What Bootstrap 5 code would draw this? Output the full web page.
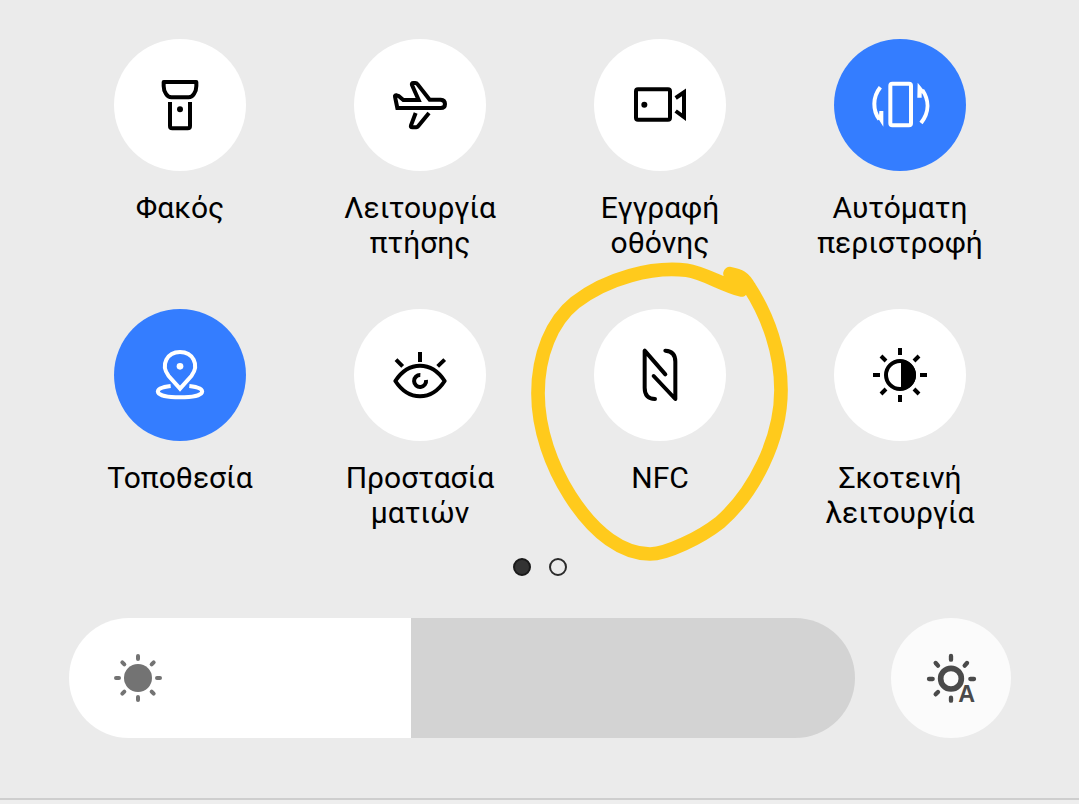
<!DOCTYPE html>
<html lang="el">
<head>
<meta charset="utf-8">
<meta name="viewport" content="width=device-width, initial-scale=1">
<title>Γρήγορες ρυθμίσεις</title>
<link rel="stylesheet" href="https://cdn.jsdelivr.net/npm/bootstrap@5.3.0/dist/css/bootstrap.min.css">
<style>
body { background: #ebebeb; color: #000; font-family: Roboto, "Noto Sans", sans-serif; }
.tiles { padding: 39px 59px 0 60px; row-gap: 48px; }
.tile { border: 0; background: none; padding: 0; color: #000; font-size: 30px; line-height: 35px; }
.disc { width: 132px; height: 132px; margin-bottom: 19px; background: #fff; }
.tile[aria-pressed="true"] .disc { background: #347dff; color: #fff; }
.glyph { width: 60px; height: 60px; fill: none; stroke: currentColor; stroke-width: 12; }
.solid { fill: currentColor; stroke: none; }
.tile-label { min-height: 71px; }
.scribble { left: 50%; top: -59px; width: 290px; height: 330px; margin-left: -140px; pointer-events: none; z-index: 2; }
.pager { gap: 18px; padding-top: 27px; }
.pager-dot { width: 18px; height: 18px; padding: 0; border: 2px solid #2b2b2b; background: transparent; }
.pager-dot[aria-current] { background: #333; border-color: #1a1a1a; }
.brightness { gap: 36px; padding: 42px 68px 60px 69px; }
.level { appearance: none; display: block; width: 100%; height: 120px; margin: 0; border-radius: 60px; background: linear-gradient(to right, #fff var(--level), #d3d3d3 var(--level)); }
.level::-webkit-slider-thumb { appearance: none; width: 1px; height: 120px; background: transparent; }
.level::-moz-range-thumb { width: 1px; height: 120px; border: 0; background: transparent; }
.level-icon { left: 39px; top: 30px; color: #737373; pointer-events: none; }
.auto { width: 120px; height: 120px; padding: 0; border: 0; background: #fbfbfb; color: #4a4a4a; }
.edge { height: 6px; border-top: 2px solid #cecece; background: #eee; }
</style>
</head>
<body>
<main>
  <section class="tiles row row-cols-4 g-0" aria-label="Γρήγορες ρυθμίσεις">
    <div class="col">
      <button type="button" class="tile w-100 d-flex flex-column align-items-center" aria-pressed="false">
        <span class="disc rounded-circle d-flex align-items-center justify-content-center">
          <svg class="glyph" viewBox="150 135 180 180" aria-hidden="true">
            <path d="M191 156H289V168C289 186 278 202 266 202H214C202 202 191 186 191 168Z" stroke-linejoin="round"/>
            <path d="M210 216V288Q210 295 217 295H263Q270 295 270 288V216"/>
            <circle class="solid" cx="240" cy="238" r="9"/>
          </svg>
        </span>
        <span class="tile-label">Φακός</span>
      </button>
    </div>
    <div class="col">
      <button type="button" class="tile w-100 d-flex flex-column align-items-center" aria-pressed="false">
        <span class="disc rounded-circle d-flex align-items-center justify-content-center">
          <svg class="glyph" viewBox="150 135 180 180" aria-hidden="true">
            <path d="M172 234L165 200Q164 195 170 196L176 198L190 210H236L216 165Q214 159 220 159H226Q230 159 233 163L269 209H302Q315 210 315 222Q315 234 302 234Z"/>
            <path d="M227 249L213 286Q211 292 217 292H229Q232 292 235 288L267 249"/>
          </svg>
        </span>
        <span class="tile-label">Λειτουργία<br>πτήσης</span>
      </button>
    </div>
    <div class="col">
      <button type="button" class="tile w-100 d-flex flex-column align-items-center" aria-pressed="false">
        <span class="disc rounded-circle d-flex align-items-center justify-content-center">
          <svg class="glyph" viewBox="150 135 180 180" aria-hidden="true">
            <rect x="168" y="178" width="102" height="91" rx="6"/>
            <path d="M287 204L312 187V261L287 243"/>
            <circle class="solid" cx="193" cy="224" r="9"/>
          </svg>
        </span>
        <span class="tile-label">Εγγραφή<br>οθόνης</span>
      </button>
    </div>
    <div class="col">
      <button type="button" class="tile w-100 d-flex flex-column align-items-center" aria-pressed="true">
        <span class="disc rounded-circle d-flex align-items-center justify-content-center">
          <svg class="glyph" viewBox="180 135 180 180" aria-hidden="true">
            <rect x="241" y="161" width="62" height="125" rx="6"/>
            <path d="M211 172C187 202 188 241 208 268"/>
            <path class="solid" d="M198 255L207 257L208 243H220V290Z"/>
            <path d="M333 279C358 247 358 211 337 180"/>
            <path class="solid" d="M323 158L346 187L335 190V203H322Z"/>
          </svg>
        </span>
        <span class="tile-label">Αυτόματη<br>περιστροφή</span>
      </button>
    </div>
    <div class="col">
      <button type="button" class="tile w-100 d-flex flex-column align-items-center" aria-pressed="true">
        <span class="disc rounded-circle d-flex align-items-center justify-content-center">
          <svg class="glyph" viewBox="150 135 180 180" aria-hidden="true">
            <path d="M240 266L206 228C180 194 202 156 240 156S300 194 274 228Z"/>
            <path d="M212 258C154 264 160 292 240 292S326 264 268 258"/>
            <circle class="solid" cx="240" cy="199" r="10"/>
          </svg>
        </span>
        <span class="tile-label">Τοποθεσία</span>
      </button>
    </div>
    <div class="col">
      <button type="button" class="tile w-100 d-flex flex-column align-items-center" aria-pressed="false">
        <span class="disc rounded-circle d-flex align-items-center justify-content-center">
          <svg class="glyph" viewBox="150 135 180 180" aria-hidden="true">
            <path d="M166 243C206 182 274 182 314 243C274 304 206 304 166 243Z" stroke-linejoin="round"/>
            <path d="M241 225A18 18 0 1 0 258 240"/>
            <path d="M240 156V186M168 179L188 199M314 179L293 199"/>
          </svg>
        </span>
        <span class="tile-label">Προστασία<br>ματιών</span>
      </button>
    </div>
    <div class="col position-relative">
      <button type="button" class="tile w-100 d-flex flex-column align-items-center" aria-pressed="false">
        <span class="disc rounded-circle d-flex align-items-center justify-content-center">
          <svg class="glyph" viewBox="330 285 180 180" stroke-linecap="round" stroke-linejoin="round" aria-hidden="true">
            <path d="M436 373L374 302V413Q374 446 405 447"/>
            <path d="M401 378L466 447V335Q466 303 436 302"/>
          </svg>
        </span>
        <span class="tile-label">NFC</span>
      </button>
      <svg class="scribble position-absolute" viewBox="0 0 870 990" fill="none" stroke="#ffca1c" stroke-width="41" stroke-linecap="round" stroke-linejoin="round" aria-hidden="true">
        <path d="M664 120C610 106 550 68 500 61C400 48 260 84 165 158C95 214 54 315 54 430C54 540 95 650 150 737C225 855 310 911 390 912C440 912 540 864 600 817C700 730 783 570 783 420C783 310 745 200 688 112C672 82 658 76 630 71L666 108"/>
      </svg>
    </div>
    <div class="col">
      <button type="button" class="tile w-100 d-flex flex-column align-items-center" aria-pressed="false">
        <span class="disc rounded-circle d-flex align-items-center justify-content-center">
          <svg class="glyph" viewBox="150 135 180 180" aria-hidden="true">
            <circle cx="240" cy="225" r="42"/>
            <path class="solid" d="M243 180A45 45 0 0 1 243 270Z"/>
            <path d="M240 144V165M240 285V306M159 225H180M300 225H321M183 168L198 183M282 267L297 282M297 168L282 183M198 267L183 282"/>
          </svg>
        </span>
        <span class="tile-label">Σκοτεινή<br>λειτουργία</span>
      </button>
    </div>
  </section>

  <nav class="pager d-flex justify-content-center" aria-label="Σελίδες">
    <button type="button" class="pager-dot rounded-circle" aria-label="Σελίδα 1" aria-current="page"></button>
    <button type="button" class="pager-dot rounded-circle" aria-label="Σελίδα 2"></button>
  </nav>

  <section class="brightness d-flex align-items-center">
    <div class="position-relative flex-grow-1">
      <input type="range" class="level" min="0" max="1000" value="435" style="--level: 43.5%" aria-label="Φωτεινότητα">
      <svg class="glyph level-icon position-absolute" viewBox="144 144 180 180" stroke-linecap="round" aria-hidden="true">
        <circle class="solid" cx="234" cy="234" r="42"/>
        <path d="M234 168V177M234 291V300M168 234H177M291 234H300M187 187L193 193M275 275L281 281M281 187L275 193M193 275L187 281"/>
      </svg>
    </div>
    <button type="button" class="auto rounded-circle flex-shrink-0 d-flex align-items-center justify-content-center" aria-label="Αυτόματη φωτεινότητα">
      <svg class="glyph" viewBox="153 144 180 180" stroke-linecap="round" aria-hidden="true">
        <circle cx="243" cy="236" r="31" stroke-width="17"/>
        <path d="M243 168V179M243 293V302M177 237H188M301 237H312M197 189L204 197M291 189L284 197M204 276L197 283" stroke-width="13"/>
        <text class="solid" x="290" y="307" text-anchor="middle" font-family="Liberation Sans, sans-serif" font-weight="700" font-size="70">A</text>
      </svg>
    </button>
  </section>
</main>
<footer class="edge"></footer>
<script src="https://cdn.jsdelivr.net/npm/bootstrap@5.3.0/dist/js/bootstrap.bundle.min.js"></script>
</body>
</html>
